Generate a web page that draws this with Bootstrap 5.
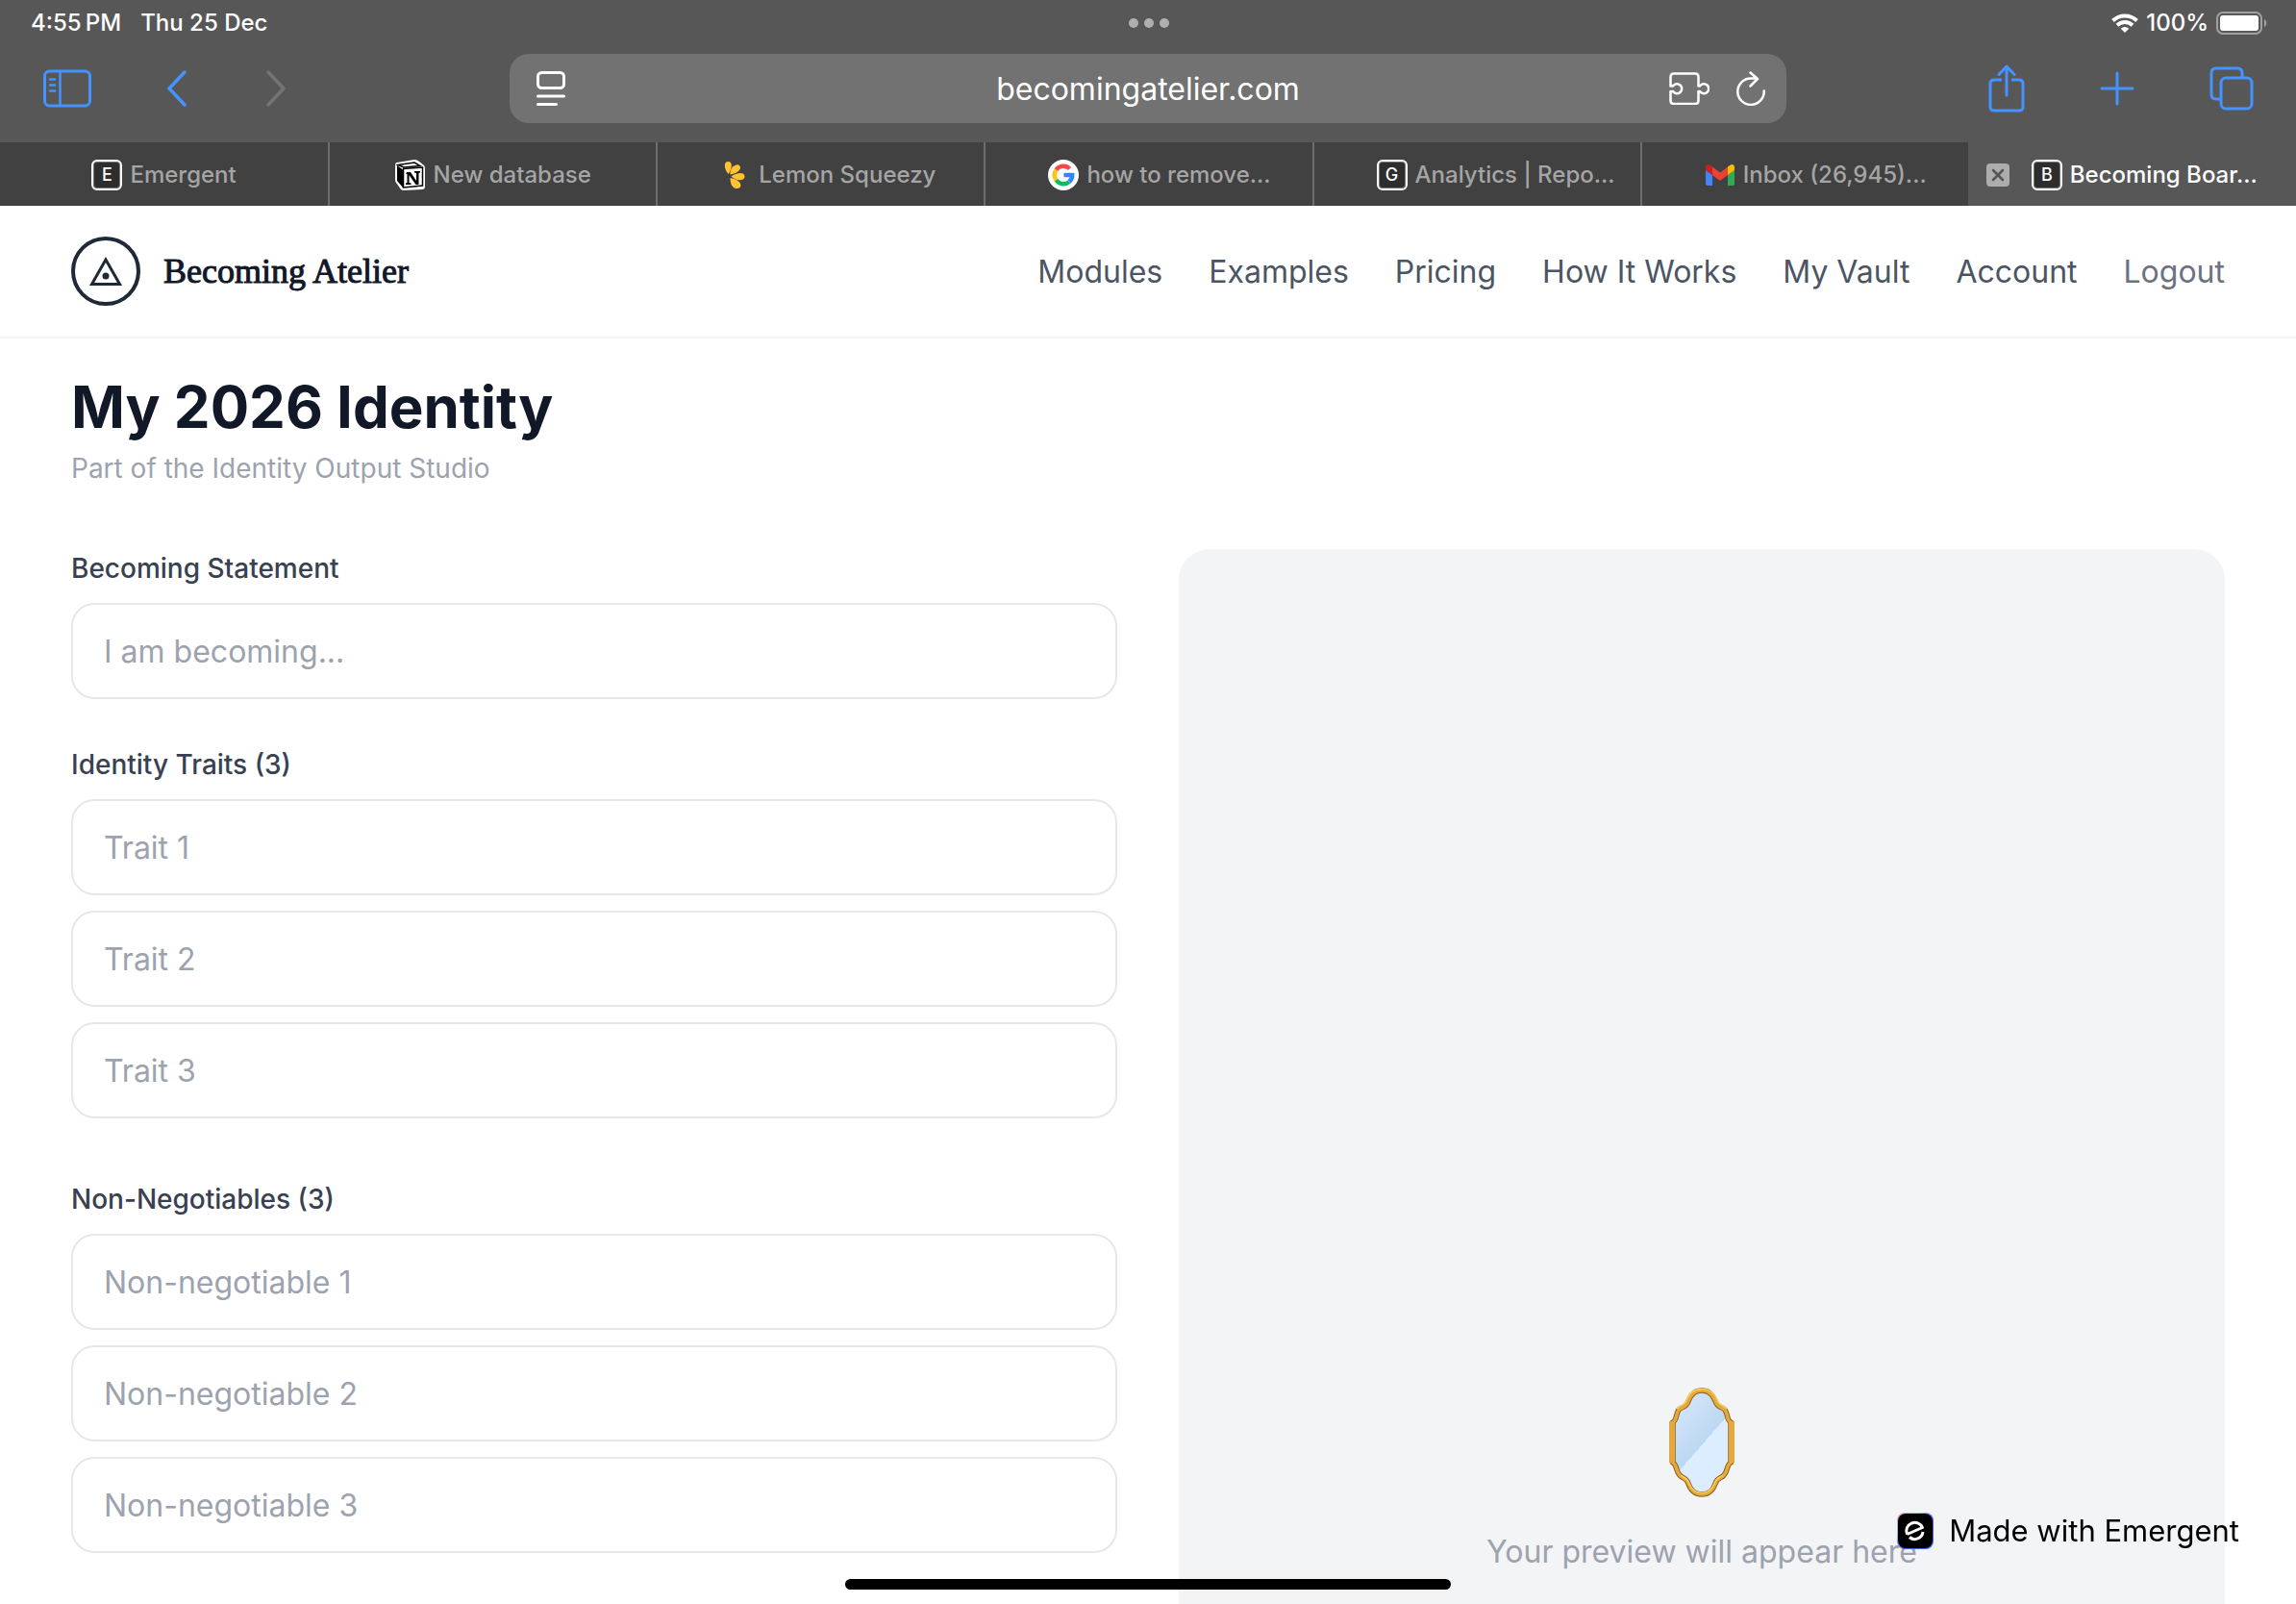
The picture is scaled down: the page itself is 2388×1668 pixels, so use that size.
<!DOCTYPE html>
<html lang="en">
<head>
<meta charset="utf-8">
<meta name="viewport" content="width=device-width, initial-scale=1">
<title>Becoming Board</title>
<link href="https://cdn.jsdelivr.net/npm/bootstrap@5.3.0/dist/css/bootstrap.min.css" rel="stylesheet">
<style>
  body { font-family: Inter, "Liberation Sans", sans-serif; font-size: 32px; line-height: 48px; color: #111827; background: #fff; }
  svg { display: block; flex: none; }
  .chrome-bar { background: #575757; color: #fff; }
  .status-row { height: 48px; padding: 0 30px 0 32px; font-size: 24px; line-height: 32px; font-weight: 500; }
  .status-left { gap: 20px; }
  .tool-row { height: 100px; padding: 8px 44px 20px; }
  .side-tools { flex: 0 0 486px; gap: 78px; }
  .url-field { height: 72px; border-radius: 20px; background: #727272; padding: 0 22px 0 28px; }
  .url-field input { background: none; border: 0; color: #fff; font-size: 32px; line-height: 48px; text-align: center; min-width: 0; outline: 0; padding: 2px 0 0 64px; }
  .url-icons { gap: 28px; }
  .tab-row { height: 66px; background: #414141; font-size: 24px; line-height: 32px; font-weight: 500; }
  .page-tab { flex: 0 0 calc(100% / 7); min-width: 0; color: #a5a5a5; gap: 8px; border-left: 2px solid #6d6d6d; text-decoration: none; white-space: nowrap; padding-top: 2px; }
  .page-tab:first-child { border-left: 0; }
  .page-tab:not(.current)::before { content: ""; flex: 1 1 0; min-width: 57px; }
  .page-tab:not(.current)::after { content: ""; flex: 1 1 0; }
  .page-tab.current { background: #575757; color: #fff; border-color: #575757; padding-left: 17px; }
  .letter-ico { width: 32px; height: 32px; border-radius: 6px; border: 2px solid #fff; background: #2d2d2d; color: #fff; font-size: 18px; line-height: 28px; text-align: center; flex: none; box-shadow: inset 0 0 0 1px #777; }
  .close-tab { width: 24px; height: 24px; border-radius: 4px; background: #adadad; border: 0; padding: 5px; margin-right: 15px; }
  .site-head { padding: 0 74px; height: 138px; border-bottom: 2px solid #f3f4f6; }
  .brand-name { font-family: "Liberation Serif", serif; font-size: 36px; line-height: 48px; color: #111827; -webkit-text-stroke: 1px #111827; }
  .site-nav { gap: 48px; padding-top: 2px; }
  .site-nav a { color: #4b5563; text-decoration: none; }
  .site-nav a.quiet { color: #6b7280; }
  .page-main { padding: 35px 74px 0; }
  h1 { font-size: 60px; line-height: 72px; font-weight: 700; margin: 0; }
  .sub-line { font-size: 28px; line-height: 40px; color: #9ca3af; margin: 8px 0 64px; }
  .work-grid { --bs-gutter-x: 64px; }
  .field-label { display: block; font-size: 28px; line-height: 40px; font-weight: 500; color: #374151; margin-bottom: 16px; padding: 0; border: 0; float: none; }
  .field-group { margin-bottom: 48px; }
  .big-input { height: 100px; border: 2px solid #e5e7eb; border-radius: 24px; padding: 24px 32px; font-size: 32px; line-height: 48px; color: #111827; }
  .big-input::placeholder { color: #9ca3af; }
  .stacked .big-input { margin-bottom: 16px; }
  .preview-box { aspect-ratio: 9 / 16; border-radius: 32px; background: #f3f4f6; color: #9ca3af; gap: 32px; }
  .made-badge { right: 59px; bottom: 52px; gap: 16px; color: #000; text-decoration: none; font-size: 31px; line-height: 48px; }
  .home-bar { left: 50%; bottom: 15px; width: 630px; height: 11px; margin-left: -315px; border-radius: 6px; background: #000; }
</style>
<script src="https://cdn.jsdelivr.net/npm/bootstrap@5.3.0/dist/js/bootstrap.bundle.min.js"></script>
</head>
<body class="vh-100 overflow-hidden d-flex flex-column">

<div class="chrome-bar flex-shrink-0">
  <div class="status-row d-flex align-items-center">
    <div class="status-left col d-flex"><span>4:55&#8201;PM</span><span>Thu 25 Dec</span></div>
    <svg width="44" height="10" viewBox="0 0 44 10" fill="#b0b0b0" aria-hidden="true"><circle cx="6" cy="5" r="5"/><circle cx="22" cy="5" r="5"/><circle cx="38" cy="5" r="5"/></svg>
    <div class="col d-flex justify-content-end align-items-center gap-2">
      <svg width="28" height="20" viewBox="0 0 28 20" aria-hidden="true"><g fill="none" stroke="#fff" stroke-width="4"><path d="M1.5 7.5a18 18 0 0 1 25 0"/><path d="M6 12.2a11.500 11.500 0 0 1 16 0"/></g><path d="M14 20l-4.300-4.300a6 6 0 0 1 8.600 0z" fill="#fff"/></svg>
      <span>100%</span>
      <svg width="53" height="24" viewBox="0 0 53 24" aria-hidden="true"><rect x="1" y="1" width="46" height="22" rx="6" fill="none" stroke="#a0a0a0" stroke-width="2"/><rect x="4" y="4" width="40" height="16" rx="3" fill="#fff"/><path d="M50 8c3 1 3 7 0 8z" fill="#a0a0a0"/></svg>
    </div>
  </div>

  <div class="tool-row d-flex align-items-center">
    <div class="side-tools d-flex align-items-center">
      <button class="btn p-0 border-0" aria-label="Sidebar"><svg width="52" height="40" viewBox="0 0 52 40" fill="none" stroke="#4593ff" stroke-width="3" stroke-linecap="round"><rect x="2.500" y="2" width="47" height="36" rx="5"/><path d="M18.500 2v36M8 10.500h5M8 16.500h5M8 22.500h5" stroke-width="2.500"/></svg></button>
      <button class="btn p-0 border-0" aria-label="Back"><svg width="22" height="38" viewBox="1 0 22 38" fill="none" stroke="#4593ff" stroke-width="3.500" stroke-linecap="round" stroke-linejoin="round"><path d="M19 2L3 19l16 17"/></svg></button>
      <button class="btn p-0 border-0" aria-label="Forward"><svg width="24" height="38" viewBox="0 0 24 38" fill="none" stroke="#747474" stroke-width="3.500" stroke-linecap="round" stroke-linejoin="round"><path d="M5 2l16 17L5 36"/></svg></button>
    </div>
    <div class="url-field flex-grow-1 d-flex align-items-center">
      <svg width="30" height="36" viewBox="0 0 30 36" fill="none" stroke="#fff" stroke-width="3" stroke-linecap="round" aria-hidden="true"><rect x="1.500" y="1.500" width="27" height="16" rx="4"/><path d="M1.500 26h27M1.500 34.500h19"/></svg>
      <input class="flex-grow-1" type="text" aria-label="Address" value="becomingatelier.com">
      <div class="url-icons d-flex align-items-center">
        <svg width="42" height="34" viewBox="0 0 42 34" fill="none" stroke="#fff" stroke-width="2.500" stroke-linejoin="round" aria-hidden="true"><path d="M5 1.500h22q3.500 0 3.500 3.500v9.500h1.500a5 5 0 1 1 0 5.500h-1.500v9.500q0 3.500-3.500 3.500H5q-3.500 0-3.500-3.500V20H4a5 5 0 1 0 0-5.500H1.500V5q0-3.500 3.500-3.500z"/></svg>
        <svg width="30" height="36" viewBox="0 0 30 36" fill="none" stroke="#fff" stroke-width="2.500" stroke-linecap="round" stroke-linejoin="round" aria-hidden="true"><path d="M28.700 20.500A13.700 13.700 0 1 1 15 7.500h6.500M14.500 1.500l7.500 6.500-7.500 7.500"/></svg>
      </div>
    </div>
    <div class="side-tools d-flex align-items-center justify-content-end">
      <button class="btn p-0 border-0" aria-label="Share"><svg width="38" height="50" viewBox="0 0 38 50" fill="none" stroke="#4593ff" stroke-width="3" stroke-linecap="round" stroke-linejoin="round"><path d="M14 16H6q-4 0-4 4v24q0 4 4 4h26q4 0 4-4V20q0-4-4-4h-8" stroke-linecap="butt"/><path d="M19 32V3M11 10.500L19 2l8 8.500"/></svg></button>
      <button class="btn p-0 border-0" aria-label="New tab"><svg width="36" height="36" viewBox="0 0 36 36" fill="none" stroke="#4593ff" stroke-width="3" stroke-linecap="round"><path d="M18 2v32M2 18h32"/></svg></button>
      <button class="btn p-0 border-0" aria-label="Tabs"><svg width="46" height="46" viewBox="0 0 46 46" fill="none" stroke="#4593ff" stroke-width="3"><path d="M34 11V7q0-5-5-5H7Q2 2 2 7v22q0 5 5 5h4"/><rect x="12" y="12" width="32" height="32" rx="5"/></svg></button>
    </div>
  </div>

  <nav class="tab-row d-flex" aria-label="Open tabs">
    <a class="page-tab d-flex align-items-center" href="#"><span class="letter-ico">E</span>Emergent</a>
    <a class="page-tab d-flex align-items-center" href="#"><svg width="32" height="32" viewBox="0 0 32 32"><path d="M2 3L20 0q3 0 5 2l5 4q1 1 1 3v19q0 3-3 3L9 32q-2 0-3-1l-5-7q-1-1-1-3V6q0-3 2-3z" fill="#fff"/><path d="M3 5.500L20 3l6 3.500L9 8z" fill="#fff" stroke="#000" stroke-width="1.500"/><path d="M2 6l6 4.500V29l-6-7z" fill="#000"/><path d="M8.500 9.500L28.500 8v19L8.500 29z" fill="#fff" stroke="#000" stroke-width="1.500"/><path d="M12 13h4l6 9v-8l-2-.5V12h6v1.500l-1.500.5v12h-3l-7-10v8l2 .5V26h-5.500v-1.500l1.500-.5v-9l-1.500-.5z" fill="#000"/></svg>New database</a>
    <a class="page-tab d-flex align-items-center" href="#"><svg width="32" height="32" viewBox="0 -2 32 32" fill="#ffc233"><path d="M8.500 13C4.500 9 3 0 8 0S13 6 8.500 13z"/><path d="M10.500 13.500C9.500 8 14 3 18.500 3.200 23.500 5 21 12 10.500 13.500z"/><path d="M11.500 15.500C17 11 25.500 10.500 25.500 15.500S17 20.500 11.500 15.500z"/><path d="M10.500 17C17 18 23 22 21 26.500 17 30 10.500 28 10.500 17z"/></svg>Lemon Squeezy</a>
    <a class="page-tab d-flex align-items-center" href="#"><svg width="32" height="32" viewBox="0 0 32 32" fill="none" stroke-width="4.500"><circle cx="16" cy="16" r="16" fill="#fff" stroke="none"/><path d="M22.500 9.500A9.200 9.200 0 0 0 8.500 10.700" stroke="#ff4641"/><path d="M8.500 10.700a9.200 9.200 0 0 0 0 10.600" stroke="#fcc417"/><path d="M8.500 21.300a9.200 9.200 0 0 0 13.500 1.800" stroke="#0ebc5f"/><path d="M22 23a9.200 9.200 0 0 0 3.200-7H16.500" stroke="#3186ff"/></svg>how to remove...</a>
    <a class="page-tab d-flex align-items-center" href="#"><span class="letter-ico">G</span>Analytics | Repo...</a>
    <a class="page-tab d-flex align-items-center" href="#"><svg width="32" height="22" viewBox="-1 0 32 22"><path d="M0 6l7 5v11H2q-2 0-2-2z" fill="#4285f4"/><path d="M30 6l-7 5v11h5q2 0 2-2z" fill="#34a853"/><path d="M7 2.500l8 6 8-6v8.500l-8 6-8-6z" fill="#ea4335"/><path d="M0 3q0-3 3-3 1.500 0 4 2.500V11L0 6z" fill="#c5221f"/><path d="M30 3q0-3-3-3-1.500 0-4 2.500V11l7-5z" fill="#fbbc04"/></svg>Inbox (26,945)...</a>
    <div class="page-tab current d-flex align-items-center"><button class="close-tab" aria-label="Close tab"><svg width="14" height="14" viewBox="0 0 14 14" stroke="#555" stroke-width="2.500" stroke-linecap="round"><path d="M2 2l10 10M12 2L2 12"/></svg></button><span class="letter-ico">B</span><span>Becoming Boar...</span></div>
  </nav>
</div>

<header class="site-head flex-shrink-0 d-flex align-items-center justify-content-between">
  <a class="d-flex align-items-center gap-4 text-decoration-none" href="#">
    <svg width="72" height="72" viewBox="0 0 72 72" fill="none" stroke="#1f2937" aria-hidden="true"><circle cx="36" cy="36" r="34" stroke-width="4"/><path d="M36 24L21.500 49.500h29z" stroke-width="3"/><circle cx="36" cy="41" r="3.500" fill="#1f2937" stroke="none"/></svg>
    <span class="brand-name">Becoming Atelier</span>
  </a>
  <nav class="site-nav d-flex" aria-label="Main">
    <a href="#">Modules</a><a href="#">Examples</a><a href="#">Pricing</a><a href="#">How It Works</a><a href="#">My Vault</a><a href="#">Account</a><a class="quiet" href="#">Logout</a>
  </nav>
</header>

<main class="page-main flex-grow-1 overflow-hidden">
  <h1>My 2026 Identity</h1>
  <p class="sub-line">Part of the Identity Output Studio</p>
  <div class="row work-grid">
    <form class="col-6">
      <div class="field-group">
        <label class="field-label" for="statement">Becoming Statement</label>
        <input class="form-control big-input" id="statement" type="text" placeholder="I am becoming...">
      </div>
      <fieldset class="field-group stacked">
        <legend class="field-label">Identity Traits (3)</legend>
        <input class="form-control big-input" type="text" aria-label="Trait 1" placeholder="Trait 1">
        <input class="form-control big-input" type="text" aria-label="Trait 2" placeholder="Trait 2">
        <input class="form-control big-input" type="text" aria-label="Trait 3" placeholder="Trait 3">
      </fieldset>
      <fieldset class="field-group stacked">
        <legend class="field-label">Non-Negotiables (3)</legend>
        <input class="form-control big-input" type="text" aria-label="Non-negotiable 1" placeholder="Non-negotiable 1">
        <input class="form-control big-input" type="text" aria-label="Non-negotiable 2" placeholder="Non-negotiable 2">
        <input class="form-control big-input" type="text" aria-label="Non-negotiable 3" placeholder="Non-negotiable 3">
      </fieldset>
    </form>
    <div class="col-6">
      <div class="preview-box d-flex flex-column align-items-center justify-content-center">
        <svg width="68" height="120" viewBox="0 -5 68 120" role="img" aria-label="Mirror">
          <defs>
            <linearGradient id="glass" gradientUnits="userSpaceOnUse" x1="-2" y1="27" x2="71" y2="91"><stop offset="0" stop-color="#d3e6fb"/><stop offset=".5" stop-color="#bdd8f2"/><stop offset=".5" stop-color="#dcedff"/><stop offset="1" stop-color="#dcedff"/></linearGradient>
            <path id="rim" d="M4 36C8 34 7 27 10 23C13 20 18 21 20 14C23 6 28 3 34 3C40 3 45 6 48 14C50 21 55 20 58 23C61 27 60 34 64 36V78C60 80 61 87 57 91C54 95 50 93 48 100C45 108 41 111 34 111C27 111 23 108 20 100C18 93 14 95 11 91C7 87 8 80 4 78Z"/>
          </defs>
          <use href="#rim" fill="url(#glass)" stroke="#94601a" stroke-width="5.500"/>
          <use href="#rim" fill="none" stroke="#e3a93c" stroke-width="3.500"/>
          <path d="M8 22C12 18 16 19 18 13C21 5 27 1.500 34 1.500S47 5 50 13C52 19 56 18 60 22M12 91C16 95 19 93 21 100C24 107 28 109.500 34 109.500S44 107 47 100C49 93 53 94 56 91" fill="none" stroke="#f8d260" stroke-width="1.500"/>
          <path d="M0 35h6v43H0zM62 35h6v43h-6z" fill="#e3a93f"/>
        </svg>
        <span>Your preview will appear here</span>
      </div>
    </div>
  </div>
</main>

<a class="made-badge position-fixed d-flex align-items-center" href="#">
  <svg width="38" height="38" viewBox="0 0 38 38" aria-hidden="true"><defs><linearGradient id="glow" x1="0" y1="0" x2="1" y2="1"><stop offset="0" stop-color="#ff8fb0"/><stop offset=".3" stop-color="#8fc4ff"/><stop offset=".6" stop-color="#5b52f0"/><stop offset="1" stop-color="#2f7bf5"/></linearGradient></defs><rect width="38" height="38" rx="8" fill="url(#glow)"/><rect x="1" y="1" width="36" height="36" rx="8" fill="#000"/><g fill="none" stroke="#fff" stroke-width="3"><path d="M10.500 22.500A8.500 8.500 0 0 1 26.500 15.500L10.500 22.500" stroke-linejoin="round"/><path d="M13 25.500A8.500 8.500 0 0 0 27 20"/></g></svg>
  Made with Emergent
</a>
<div class="home-bar position-fixed"></div>
</body>
</html>
